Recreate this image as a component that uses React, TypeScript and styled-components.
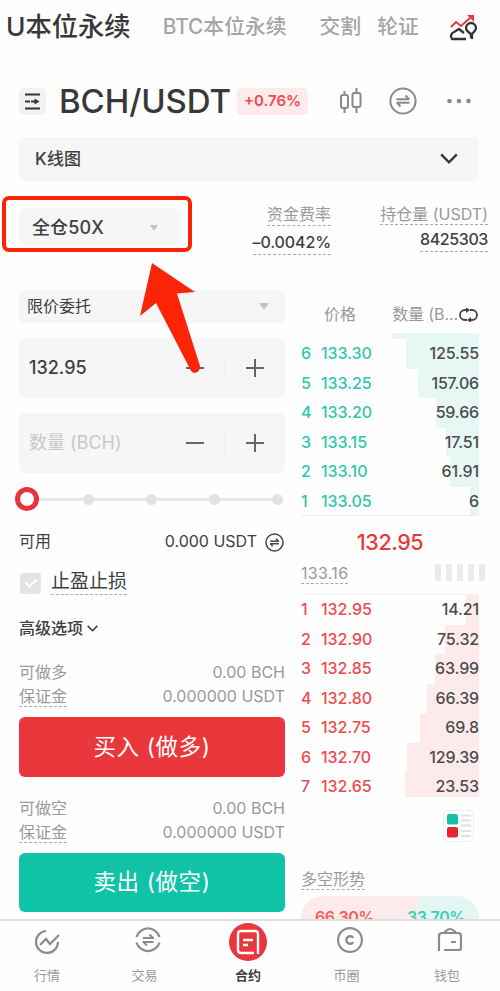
import React from 'react';
import styled, { createGlobalStyle } from 'styled-components';

const RED = '#ea373c';
const GREEN = '#10c3a6';

const Global = createGlobalStyle`
  * { box-sizing: border-box; }
  body {
    margin: 0;
    background: #fefefe;
    color: #383838;
    font-family: Inter, "Noto Sans CJK SC", sans-serif;
  }
`;

const Screen = styled.div`
  position: relative;
  width: 500px;
  height: 991px;
  overflow: hidden;
  display: flex;
  flex-direction: column;
  background: #fefefe;
`;

const Label = styled.span<{ $size: number; $color?: string; $weight?: number; $track?: number }>`
  font-size: ${p => p.$size}px;
  line-height: 1.2;
  font-weight: ${p => p.$weight ?? 400};
  letter-spacing: ${p => p.$track ?? 0}px;
  color: ${p => p.$color ?? '#404040'};
  white-space: nowrap;
`;

const Underlined = styled(Label)<{ $drop?: number }>`
  padding-bottom: ${p => p.$drop ?? 0}px;
  border-bottom: 1px dashed #aaa;
`;

const Tabs = styled.nav`
  display: flex;
  align-items: center;
  height: 54px;
  padding: 0 22px 0 6px;
  flex: none;
`;
const Tab = styled(Label)<{ $gap: number }>`
  margin-right: ${p => p.$gap}px;
`;
const TabsIcon = styled.svg`
  margin-left: auto;
`;

const PairRow = styled.header`
  display: flex;
  align-items: center;
  height: 83px;
  padding: 11px 25px 0 19px;
  flex: none;
`;
const MenuButton = styled.span`
  width: 27px;
  height: 27px;
  border-radius: 5px;
  background: #f2f2f2;
  display: grid;
  place-items: center;
  margin-right: 13px;
`;
const PairName = styled(Label)`
  width: 178px;
  padding-top: 2px;
`;
const ChangeBadge = styled.span`
  width: 71px;
  height: 27px;
  border-radius: 5px;
  background: #fdeaeb;
  display: grid;
  place-items: center;
`;
const PairActions = styled.div`
  margin-left: auto;
  display: flex;
  align-items: center;
  gap: 26px;
`;

const ChartBar = styled.section`
  display: flex;
  align-items: center;
  justify-content: space-between;
  height: 44px;
  margin: 0 21px 0 19px;
  padding: 0 21px 0 16px;
  border-radius: 6px;
  background: #f6f6f6;
  flex: none;
`;

const InfoRow = styled.section`
  display: flex;
  height: 109px;
  padding: 27px 12px 0 19px;
  flex: none;
`;
const Leverage = styled.div`
  width: 161px;
  height: 37px;
  border-radius: 6px;
  background: #f6f6f6;
  display: flex;
  align-items: center;
  justify-content: space-between;
  padding: 2px 22px 0 13px;
`;
const Stat = styled.div<{ $width: number; $gap: number }>`
  display: flex;
  flex-direction: column;
  align-items: flex-end;
  width: ${p => p.$width}px;
  gap: ${p => p.$gap}px;
  margin-top: -3px;
`;

const Caret = styled.span<{ $w: number }>`
  border: ${p => p.$w / 2}px solid transparent;
  border-top: ${p => p.$w * 0.7}px solid #c4c4c4;
  border-bottom: 0;
`;

const Columns = styled.main`
  display: grid;
  grid-template-columns: 266px 178px;
  column-gap: 16px;
  padding-left: 19px;
  height: 629px;
  overflow: hidden;
  flex: none;
`;
const OrderForm = styled.section`
  display: flex;
  flex-direction: column;
`;
const Select = styled.div`
  height: 33px;
  border-radius: 6px;
  background: #f6f6f6;
  display: flex;
  align-items: center;
  justify-content: space-between;
  padding: 0 16px 0 8px;
`;
const Field = styled.div`
  height: 60px;
  margin-top: 15px;
  border-radius: 6px;
  background: #f6f6f6;
  display: grid;
  grid-template-columns: 135px 60px 61px;
  align-items: center;
  padding-left: 10px;
`;
const StepCell = styled.span<{ $divided?: boolean }>`
  display: grid;
  place-items: center;
  height: 22px;
  border-left: 1px solid ${p => (p.$divided ? '#eeeeee' : 'transparent')};
`;

const SliderTrack = styled.div`
  height: 24px;
  margin: 14px 1px 0 -4px;
  display: flex;
  align-items: center;
`;
const Thumb = styled.span`
  width: 24px;
  height: 24px;
  border: 5.5px solid #e93439;
  border-radius: 50%;
  background: #fff;
`;
const Segment = styled.span<{ $w: number }>`
  width: ${p => p.$w}px;
  height: 3px;
  background: #e7e7e7;
`;
const Stop = styled.span`
  width: 11px;
  height: 11px;
  border-radius: 50%;
  background: #e2e2e2;
`;

const FormRow = styled.div<{ $h: number; $top?: number; $between?: boolean }>`
  display: flex;
  align-items: center;
  justify-content: ${p => (p.$between ? 'space-between' : 'flex-start')};
  height: ${p => p.$h}px;
  margin-top: ${p => p.$top ?? 0}px;
`;
const Available = styled.span`
  display: flex;
  align-items: center;
  gap: 8px;
  padding-right: 1px;
`;
const Checkbox = styled.span`
  width: 21px;
  height: 21px;
  border-radius: 3px;
  background: #e4e4e4;
  margin: 0 10px 0 1px;
  display: grid;
  place-items: center;
`;
const TradeButton = styled.button<{ $fill: string; $h: number }>`
  height: ${p => p.$h}px;
  border: 0;
  border-radius: 6px;
  background: ${p => p.$fill};
  color: #fff;
  font: 400 22.5px/1 Inter, "Noto Sans CJK SC", sans-serif;
  letter-spacing: 0.6px;
  margin: 8px 0 0;
  padding: 0;
`;

const Book = styled.section`
  display: flex;
  flex-direction: column;
`;
const BookHead = styled.div`
  display: flex;
  align-items: center;
  height: 43px;
  padding: 7px 1px 0 23px;
  justify-content: space-between;
`;
const BookAmount = styled.span`
  display: flex;
  align-items: center;
  gap: 1px;
`;
const TopDepth = styled.span`
  align-self: flex-end;
  width: 88px;
  height: 6px;
  background: #e6f7f4;
`;
const Row = styled.div<{ $depth: number; $tint: string; $h?: number }>`
  display: grid;
  grid-template-columns: 20px 1fr auto;
  align-items: center;
  height: 29.5px;
  flex: none;
  background: linear-gradient(${p => p.$tint}, ${p => p.$tint}) right top / ${p => p.$depth}px ${p => p.$h ?? 30}px no-repeat;
`;
const LastPrice = styled.div`
  height: 49px;
  margin-top: -1px;
  padding-top: 5px;
  border-top: 1px solid #eeeeee;
  display: grid;
  place-items: center;
`;
const MarkRow = styled.div`
  display: flex;
  justify-content: space-between;
  align-items: flex-start;
  height: 30px;
  margin-right: -6px;
`;
const Signal = styled.span`
  display: flex;
  gap: 5px;
  i { width: 6px; height: 17px; background: #ebebeb; }
`;
const Asks = styled.div`
  border-top: 1px solid #f2f2f2;
`;
const LayoutSwitch = styled.span`
  align-self: flex-end;
  width: 31px;
  height: 32px;
  margin: 8px 5px 0 0;
  border: 1px solid #eeeeee;
  border-radius: 5px;
  display: grid;
  place-items: center;
  flex: none;
`;
const Sentiment = styled.div`
  margin-top: 28px;
  height: 26px;
  display: flex;
  align-items: flex-start;
`;
const RatioBar = styled.div`
  display: flex;
  justify-content: space-between;
  height: 44px;
  flex: none;
  border-radius: 22px;
  padding: 12px 14px 0;
  background: linear-gradient(90deg, #fdeaea 66.3%, #e3f6f2 66.3%);
`;

const BottomNav = styled.nav`
  height: 72px;
  border-top: 2px solid #dedede;
  background: #fefefe;
  display: grid;
  grid-template-columns: 94px 107px 94px 109px 92px;
  flex: none;
`;
const NavItem = styled.a<{ $raised?: boolean }>`
  display: grid;
  grid-template-rows: ${p => (p.$raised ? '38px 33px' : '42px 25px')};
  justify-items: center;
  align-items: center;
`;
const NavLabel = styled(Label)<{ $nudge?: number }>`
  padding-right: ${p => p.$nudge ?? 0}px;
`;

const Highlight = styled.div`
  position: absolute;
  left: 2px;
  top: 196px;
  width: 190px;
  height: 56px;
  border: 4px solid #fb2407;
  border-radius: 7px;
`;
const Pointer = styled.svg`
  position: absolute;
  left: 140px;
  top: 262px;
`;

const Swap = ({ size, color, weight = 2 }: { size: number; color: string; weight?: number }) => (
  <svg width={size} height={size} viewBox="0 0 28 28" fill="none" stroke={color} strokeWidth={weight}>
    <circle cx="14" cy="14" r="12.6" />
    <path d="M7.5 12.3h13M16.5 8.5l3.5 3.8M20.5 15.8h-13M11.5 19.5L8 15.8" />
  </svg>
);
const Chevron = ({ w, stroke }: { w: number; stroke: number }) => (
  <svg width={w} height={w * 0.65} viewBox="0 0 18 12" fill="none" stroke="#383838" strokeWidth={stroke}>
    <path d="M1 1.5l8 8 8-8" />
  </svg>
);
const Minus = () => (
  <svg width="20" height="20" stroke="#666" strokeWidth="2"><path d="M1 10h18" /></svg>
);
const Plus = () => (
  <svg width="20" height="20" stroke="#666" strokeWidth="2"><path d="M1 10h18M10 1v18" /></svg>
);

type Level = [string, string, string, number];
const sells: Level[] = [
  ['6', '133.30', '125.55', 73],
  ['5', '133.25', '157.06', 61],
  ['4', '133.20', '59.66', 43],
  ['3', '133.15', '17.51', 33],
  ['2', '133.10', '61.91', 29],
  ['1', '133.05', '6', 9],
];
const buys: Level[] = [
  ['1', '132.95', '14.21', 13],
  ['2', '132.90', '75.32', 34],
  ['3', '132.85', '63.99', 44],
  ['4', '132.80', '66.39', 52],
  ['5', '132.75', '69.8', 59],
  ['6', '132.70', '129.39', 72],
  ['7', '132.65', '23.53', 74],
];

const Levels = ({ rows, color, tint }: { rows: Level[]; color: string; tint: string }) => (
  <>
    {rows.map(([n, price, amount, depth]) => (
      <Row key={n} $depth={depth} $tint={tint} $h={n === '7' ? 25 : 30}>
        <Label $size={16} $color={color} $weight={500}>{n}</Label>
        <Label $size={16} $color={color} $weight={500} $track={-0.05}>{price}</Label>
        <Label $size={16} $color="#4c4c4c" $weight={500} $track={-0.15}>{amount}</Label>
      </Row>
    ))}
  </>
);

const Quota = ({ title, top }: { title: string; top: number }) => (
  <>
    <FormRow $h={24} $top={top} $between>
      <Label $size={16} $color="#999">{title}</Label>
      <Label $size={16} $color="#999">0.00 BCH</Label>
    </FormRow>
    <FormRow $h={24} $between>
      <Underlined $size={16} $color="#999">保证金</Underlined>
      <Label $size={16} $color="#999">0.000000 USDT</Label>
    </FormRow>
  </>
);

export default function App() {
  return (
    <Screen>
      <Global />
      <Tabs>
        <Tab $size={26.3} $weight={500} $gap={32} $color="#383838">U本位永续</Tab>
        <Tab $size={20.8} $weight={500} $color="#a5a5a5" $gap={33}>BTC本位永续</Tab>
        <Tab $size={20.8} $weight={500} $color="#a5a5a5" $gap={16}>交割</Tab>
        <Tab $size={20.8} $weight={500} $color="#a5a5a5" $gap={0}>轮证</Tab>
        <TabsIcon width="29" height="28" viewBox="0 0 29 28" fill="none" strokeWidth="2">
          <path d="M2 14l5-5 5 4 9-8" stroke={RED} />
          <path d="M18 2h7v7z" fill={RED} />
          <path d="M17 26H3c-2-2-1-6 2-7l5-3 5 4" stroke="#333" strokeWidth="2.3" />
          <path d="M22 25v-4c-3-2-5-4-5-6a5 5 0 0110 0c0 2-2 4-4 6v5" stroke="#333" strokeWidth="2.3" />
        </TabsIcon>
      </Tabs>

      <PairRow>
        <MenuButton>
          <svg width="17" height="17" stroke="#333" strokeWidth="2.2" fill="none">
            <path d="M1 1.5h15M1 8.5h5M7 8.5h4M1 15.5h15" />
            <path d="M10.5 5.5l5 3-5 3z" fill="#333" stroke="none" />
          </svg>
        </MenuButton>
        <PairName $size={33} $weight={500} $track={-0.1} $color="#383838">BCH/USDT</PairName>
        <ChangeBadge><Label $size={15} $weight={600} $color="#f04b50">+0.76%</Label></ChangeBadge>
        <PairActions>
          <svg width="24" height="26" fill="none" stroke="#8a8a8a" strokeWidth="2">
            <rect x="2" y="7" width="7" height="13" rx="2" />
            <rect x="13.5" y="5" width="8" height="14" rx="2" />
            <path d="M5.5 3v4M5.5 20v5M17.5 0v5M17.5 19v6" />
          </svg>
          <Swap size={28} color="#8a8a8a" />
          <svg width="32" height="6" fill="#8a8a8a">
            <circle cx="6.5" cy="3" r="2.3" /><circle cx="16" cy="3" r="2.3" /><circle cx="25.5" cy="3" r="2.3" />
          </svg>
        </PairActions>
      </PairRow>

      <ChartBar>
        <Label $size={17} $weight={500} $track={0.2}>K线图</Label>
        <Chevron w={18} stroke={2.5} />
      </ChartBar>

      <InfoRow>
        <Leverage>
          <Label $size={18} $weight={500} $track={0.1}>全仓50X</Label>
          <Caret $w={9} />
        </Leverage>
        <Stat $width={151} $gap={7}>
          <Underlined $size={16} $color="#999" $drop={1}>资金费率</Underlined>
          <Underlined $size={16} $weight={500} $track={-0.1} $drop={2}>–0.0042%</Underlined>
        </Stat>
        <Stat $width={157} $gap={5}>
          <Underlined $size={16} $color="#999">持仓量 (USDT)</Underlined>
          <Underlined $size={16} $weight={500} $track={-0.4} $drop={2}>8425303</Underlined>
        </Stat>
      </InfoRow>

      <Columns>
        <OrderForm>
          <Select>
            <Label $size={16}>限价委托</Label>
            <Caret $w={11} />
          </Select>
          <Field>
            <Label $size={18} $weight={500}>132.95</Label>
            <StepCell><Minus /></StepCell>
            <StepCell $divided><Plus /></StepCell>
          </Field>
          <Field>
            <Label $size={18} $color="#c8c8c8">数量 (BCH)</Label>
            <StepCell><Minus /></StepCell>
            <StepCell $divided><Plus /></StepCell>
          </Field>
          <SliderTrack>
            <Thumb />
            <Segment $w={44} /><Stop />
            <Segment $w={52} /><Stop />
            <Segment $w={52} /><Stop />
            <Segment $w={52} /><Stop />
          </SliderTrack>
          <FormRow $h={26} $top={18} $between>
            <Label $size={16}>可用</Label>
            <Available>
              <Label $size={16}>0.000 USDT</Label>
              <Swap size={19} color="#444" weight={2.2} />
            </Available>
          </FormRow>
          <FormRow $h={28} $top={14}>
            <Checkbox>
              <svg width="14" height="12" fill="none" stroke="#fff" strokeWidth="2"><path d="M1.5 5.5l4 4 7-7" /></svg>
            </Checkbox>
            <Underlined $size={19}>止盈止损</Underlined>
          </FormRow>
          <FormRow $h={26} $top={19}>
            <Label $size={16} $weight={500}>高级选项&nbsp;</Label>
            <Chevron w={11} stroke={2.5} />
          </FormRow>
          <Quota title="可做多" top={19} />
          <TradeButton $fill={RED} $h={60}>买入 (做多)</TradeButton>
          <Quota title="可做空" top={20} />
          <TradeButton $fill={GREEN} $h={59}>卖出 (做空)</TradeButton>
        </OrderForm>

        <Book>
          <BookHead>
            <Label $size={16} $color="#999">价格</Label>
            <BookAmount>
              <Label $size={16} $color="#999" $track={-0.1}>数量 (B...</Label>
              <svg width="19" height="14" fill="none" stroke="#444" strokeWidth="1.8">
                <path d="M8 2H6a5 5 0 000 10h2M11 2h2a5 5 0 010 10h-2" />
                <path d="M7 -1l4 3-4 3zM12 9l-4 3 4 3z" fill="#444" stroke="none" />
              </svg>
            </BookAmount>
          </BookHead>
          <TopDepth />
          <Levels rows={sells} color="#2fc7ad" tint="#e6f7f4" />
          <LastPrice><Label $size={21.5} $weight={500} $color={RED} $track={-0.4}>132.95</Label></LastPrice>
          <MarkRow>
            <Underlined $size={16} $color="#999" $track={0.3}>133.16</Underlined>
            <Signal><i /><i /><i /><i /><i /></Signal>
          </MarkRow>
          <Asks><Levels rows={buys} color="#ed4a4e" tint="#fdebeb" /></Asks>
          <LayoutSwitch>
            <svg width="24" height="25" stroke="#e2e2e2" strokeWidth="2">
              <rect x="0" y="1" width="11" height="10.5" rx="2" fill={GREEN} stroke="none" />
              <rect x="0" y="14" width="11" height="10.5" rx="2" fill="#e5282e" stroke="none" />
              <path d="M14 2.5h10M14 7.5h10M14 12.5h10M14 18h10M14 23h10" />
            </svg>
          </LayoutSwitch>
          <Sentiment><Underlined $size={16} $color="#999">多空形势</Underlined></Sentiment>
          <RatioBar>
            <Label $size={16} $weight={600} $color="#f15d60" $track={-0.4}>66.30%</Label>
            <Label $size={16} $weight={600} $color="#3bceb4" $track={-0.4}>33.70%</Label>
          </RatioBar>
        </Book>
      </Columns>

      <BottomNav>
        <NavItem>
          <svg width="28" height="28" fill="none" stroke="#8c8c8c" strokeWidth="2.2">
            <path d="M13 3a11 11 0 1012 11" />
            <path d="M7 17l6-6 4 5 9-9" />
          </svg>
          <NavLabel $size={13} $color="#999">行情</NavLabel>
        </NavItem>
        <NavItem $raised>
          <svg width="28" height="28" fill="none" stroke="#8c8c8c" strokeWidth="2.2">
            <path d="M2.5 11a12 12 0 0123 0M2.5 16.5a12 12 0 0023 0" />
            <path d="M9 12h11M15.5 8.5l3.5 3.5M19.5 16H8.5M13 19.5L9.5 16" strokeWidth="2" />
          </svg>
          <NavLabel $size={13} $color="#999" $nudge={6}>交易</NavLabel>
        </NavItem>
        <NavItem>
          <svg width="38" height="38" fill="none" stroke="#fff" strokeWidth="2.4">
            <circle cx="19" cy="19" r="19" fill={RED} stroke="none" />
            <path d="M25 30H12q-3 0-3-3V11q0-3 3-3h14q3 0 3 3v20" />
            <path d="M14 17h10M14 22h5" />
          </svg>
          <NavLabel $size={13} $weight={700}>合约</NavLabel>
        </NavItem>
        <NavItem $raised>
          <svg width="28" height="28" fill="none" stroke="#8c8c8c" strokeWidth="2.2">
            <circle cx="14" cy="14" r="11.9" />
            <path d="M17.3 11.9a3.8 3.8 0 100 4.2" strokeWidth="2.4" />
          </svg>
          <NavLabel $size={13} $color="#999" $nudge={6}>币圈</NavLabel>
        </NavItem>
        <NavItem $raised>
          <svg width="28" height="28" fill="none" stroke="#8c8c8c" strokeWidth="2.2">
            <path d="M3 25V10q0-3 3-3h16q3 0 3 3v12q0 2-2 2H8" />
            <path d="M8 7c2-2 3-4 6-4s4 2 6 4M15 16h5" />
          </svg>
          <NavLabel $size={13} $color="#999" $nudge={6}>钱包</NavLabel>
        </NavItem>
      </BottomNav>

      <Highlight />
      <Pointer width="62" height="114" fill="#fb2407">
        <path d="M12 1L55 30 37 31.5 60 104Q60 111 54 111 51 110 49 105L16 41 0 54z" />
      </Pointer>
    </Screen>
  );
}
